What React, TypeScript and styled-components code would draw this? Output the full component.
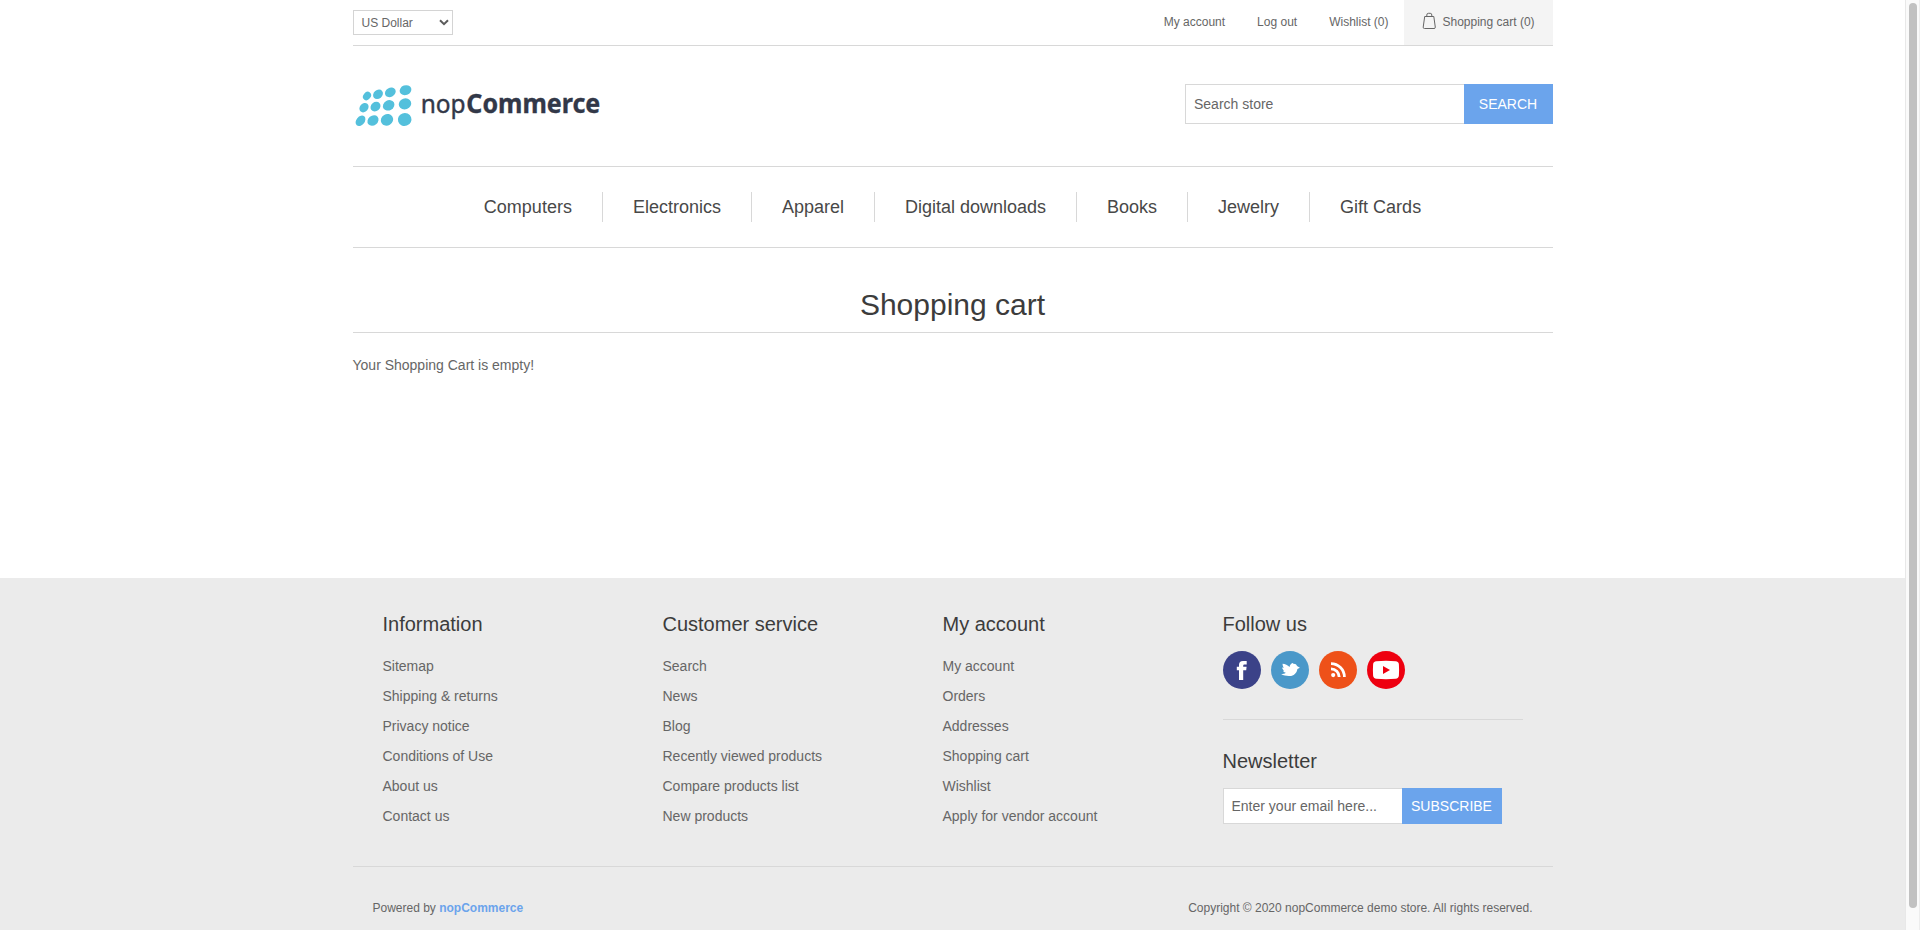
import React from "react";
import styled, { createGlobalStyle } from "styled-components";

const GlobalStyle = createGlobalStyle`
  * { box-sizing: border-box; }
  body {
    margin: 0;
    background: #fff;
    font-family: "Liberation Sans", Arial, Helvetica, sans-serif;
    font-size: 14px;
    color: #666;
    overflow: hidden;
  }
  a { color: inherit; text-decoration: none; }
  ul { list-style: none; margin: 0; padding: 0; }
`;

const Viewport = styled.div`
  display: grid;
  grid-template-columns: 1fr 15px;
  height: 930px;
  overflow: hidden;
`;

const Page = styled.div`
  display: flex;
  flex-direction: column;
  min-width: 0;
`;

const ScrollTrack = styled.div`
  background: #fafafa;
  border-left: 1px solid #e8e8e8;
  border-right: 1px solid #ededed;
  padding: 3px 2px 0 3px;
`;

const ScrollThumb = styled.div`
  width: 8px;
  height: 905px;
  border-radius: 4px;
  background: #c1c1c1;
`;

const Container = styled.div`
  width: 1200px;
  margin: 0 auto;
`;

const TopBar = styled(Container)`
  display: flex;
  justify-content: space-between;
  height: 46px;
  border-bottom: 1px solid #d8d8d8;
  font-size: 12px;
`;

const Currency = styled.div`
  display: flex;
  align-items: center;
  justify-content: space-between;
  width: 100px;
  height: 25px;
  margin-top: 10px;
  padding: 0 3px 0 8px;
  border: 1px solid #d4d4d4;
  background: #fff;
`;

const AccountLinks = styled.nav`
  display: flex;
  line-height: 44px;
`;

const AccountLink = styled.a<{ $space: number }>`
  margin-right: ${(p) => p.$space}px;
`;

const CartLink = styled.a`
  display: flex;
  width: 149px;
  height: 45px;
  padding-left: 18px;
  background: #f4f4f4;
`;

const BagIcon = styled.svg`
  margin: 12px 6px 0 0;
`;

const Header = styled(Container)`
  display: flex;
  justify-content: space-between;
  height: 120px;
  padding-top: 38px;
`;

const Logo = styled.svg`
  margin-top: -14px;
  overflow: visible;
  font-family: "Noto Sans", "Open Sans", sans-serif;
`;

const SearchForm = styled.form`
  display: flex;
`;

const Field = styled.input<{ $w: number; $h: number; $pad: number }>`
  width: ${(p) => p.$w}px;
  height: ${(p) => p.$h}px;
  padding: 0 ${(p) => p.$pad}px;
  border: 1px solid #d8d8d8;
  border-right: 0;
  border-radius: 0;
  background: #fff;
  font: inherit;
  color: #666;
  &::placeholder { color: #666; opacity: 1; }
`;

const ActionButton = styled.button<{ $w: number; $h: number }>`
  width: ${(p) => p.$w}px;
  height: ${(p) => p.$h}px;
  padding: 0;
  border: 0;
  background: #6ba4ec;
  color: #fff;
  font: inherit;
  text-transform: uppercase;
`;

const MenuBar = styled(Container)`
  display: flex;
  justify-content: center;
  align-items: center;
  height: 82px;
  border-top: 1px solid #d8d8d8;
  border-bottom: 1px solid #d8d8d8;
`;

const MenuItem = styled.a`
  padding: 0 30px;
  line-height: 30px;
  font-size: 18px;
  color: #484848;
  & + & { border-left: 1px solid #d8d8d8; }
`;

const Main = styled(Container)`
  height: 330px;
`;

const PageTitle = styled.h1`
  height: 85px;
  margin: 0;
  padding-top: 39px;
  border-bottom: 1px solid #d8d8d8;
  font-size: 30px;
  line-height: 35px;
  font-weight: 400;
  text-align: center;
  color: #3c3c3c;
`;

const EmptyMessage = styled.p`
  margin: 24px 0 0;
  line-height: 16px;
`;

const Footer = styled.footer`
  flex: 1;
  background: #ebebeb;
`;

const FooterUpper = styled(Container)`
  display: grid;
  grid-template-columns: 280px 280px 280px 300px;
  height: 289px;
  padding: 35px 30px 0;
  border-bottom: 1px solid #d8d8d8;
`;

const FooterTitle = styled.h2`
  margin: 0;
  font-size: 20px;
  line-height: 23px;
  font-weight: 400;
  color: #3c3c3c;
`;

const FooterList = styled.ul`
  margin-top: 15px;
  line-height: 30px;
`;

const Socials = styled.div`
  display: flex;
  gap: 10px;
  height: 69px;
  margin-top: 15px;
  border-bottom: 1px solid #d8d8d8;
`;

const Newsletter = styled.div`
  padding-top: 30px;
`;

const NewsletterForm = styled.form`
  display: flex;
  margin-top: 15px;
`;

const FooterLower = styled(Container)`
  display: flex;
  justify-content: space-between;
  padding: 34px 20px 0;
  font-size: 12px;
  line-height: 14px;
`;

const PoweredLink = styled.a`
  font-weight: 700;
  color: #6ba4ec;
`;

const menu = ["Computers", "Electronics", "Apparel", "Digital downloads", "Books", "Jewelry", "Gift Cards"];

const columns = [
  {
    title: "Information",
    links: ["Sitemap", "Shipping & returns", "Privacy notice", "Conditions of Use", "About us", "Contact us"],
  },
  {
    title: "Customer service",
    links: ["Search", "News", "Blog", "Recently viewed products", "Compare products list", "New products"],
  },
  {
    title: "My account",
    links: ["My account", "Orders", "Addresses", "Shopping cart", "Wishlist", "Apply for vendor account"],
  },
];

// cx, cy, rx, ry of each dot in the logo mark
const dots = [
  [81, 288, 13.5, 11], [114, 283, 16, 13], [151, 277, 17, 13.5], [196.5, 270.5, 18, 14.5],
  [72, 323, 15.5, 12.5], [106.5, 320, 16, 13.5], [146, 316, 18, 15], [195, 311.5, 19, 16.5],
  [61.5, 362.5, 17.5, 12.5], [99, 361.5, 18, 14.5], [141, 359.5, 19, 17], [194, 358.5, 20.5, 19.5],
];

function SocialIcon({ color, children }: { color: string; children: React.ReactNode }) {
  return (
    <svg width="38" height="38" viewBox="0 0 38 38">
      <circle cx="19" cy="19" r="19" fill={color} />
      {children}
    </svg>
  );
}

export default function App() {
  return (
    <Viewport>
      <GlobalStyle />
      <Page>
        <TopBar>
          <Currency>
            <span>US Dollar</span>
            <svg width="10" height="7" viewBox="0 0 10 7" fill="none" stroke="#5c5c5c" strokeWidth="2">
              <path d="M1 1.2 5 5.2 9 1.2" />
            </svg>
          </Currency>
          <AccountLinks>
            <AccountLink $space={32}>My account</AccountLink>
            <AccountLink $space={32}>Log out</AccountLink>
            <AccountLink $space={15}>Wishlist (0)</AccountLink>
            <CartLink>
              <BagIcon width="15" height="18" viewBox="0 0 15 18" fill="none" stroke="#666">
                <path d="M2.7 4.5h9.1l1.5 10.7q.1 1.3-1.3 1.3H2.5q-1.4 0-1.3-1.3z" />
                <path d="M4.8 4.2V3q0-1.7 1.6-1.7h1.8q1.6 0 1.6 1.7v1.2" />
              </BagIcon>
              <span>Shopping cart (0)</span>
            </CartLink>
          </AccountLinks>
        </TopBar>

        <Header>
          <Logo width="250" height="70" viewBox="39 210 750 210">
            <g fill="#54c0dc">
              {dots.map(([x, y, rx, ry], i) => (
                <ellipse key={i} cx={x} cy={y} rx={rx} ry={ry} transform={`rotate(${-50 + (i % 4) * 10} ${x} ${y})`} />
              ))}
            </g>
            <g fill="#323848" fontSize="78">
              <text x="242" y="339" textLength="135" lengthAdjust="spacingAndGlyphs" stroke="#323848" strokeWidth="1.2">nop</text>
              <text x="379" y="339" fontWeight="700" textLength="402" lengthAdjust="spacingAndGlyphs" stroke="#323848" strokeWidth="1">Commerce</text>
            </g>
          </Logo>
          <SearchForm>
            <Field $w={279} $h={40} $pad={8.5} placeholder="Search store" />
            <ActionButton type="button" $w={89} $h={40}>Search</ActionButton>
          </SearchForm>
        </Header>

        <MenuBar as="nav">
          {menu.map((m) => (
            <MenuItem key={m}>{m}</MenuItem>
          ))}
        </MenuBar>

        <Main>
          <PageTitle>Shopping cart</PageTitle>
          <EmptyMessage>Your Shopping Cart is empty!</EmptyMessage>
        </Main>

        <Footer>
          <FooterUpper>
            {columns.map((c) => (
              <div key={c.title}>
                <FooterTitle>{c.title}</FooterTitle>
                <FooterList>
                  {c.links.map((l) => (
                    <li key={l}><a>{l}</a></li>
                  ))}
                </FooterList>
              </div>
            ))}
            <div>
              <FooterTitle>Follow us</FooterTitle>
              <Socials>
                <SocialIcon color="#3b4288">
                  <path fill="#fff" d="M16 29V19.2h-2.2v-3.4H16v-2q0-3.9 4-3.9h3.7v3.6h-2.3q-1.2 0-1.2 1.2v1.1h3.4l-.4 3.4h-3V29z" />
                </SocialIcon>
                <SocialIcon color="#4a98c9">
                  <path fill="#fff" d="M11.6 12.8c2.6.2 5 1.2 7 3.2.2-2 1.3-3.4 3.2-4l.5.8c1.8-.2 3.2.7 3.7 2.3l2.9 1.6-2.5 1.3c-.7 4.3-3.6 7-7.7 7-3.2.1-6-.3-8.6-1.9 1.8 0 3.4-.3 4.8-1.4-1.4-.3-2.4-1-2.9-2l1.3-.3c-1.3-.7-2-1.7-2.1-3l1.6.3c-.9-1.2-1.3-2.4-1.2-3.9z" />
                </SocialIcon>
                <SocialIcon color="#ee5119">
                  <circle cx="14.2" cy="24.1" r="2.1" fill="#fff" />
                  <path d="M12 17.8A8.2 8.2 0 0 1 20.2 26M12 12.6A13.4 13.4 0 0 1 25.4 26" fill="none" stroke="#fff" strokeWidth="2.8" />
                </SocialIcon>
                <SocialIcon color="#ee0010">
                  <path fill="#fff" d="M9.4 10.2q9.6-.8 19.2 0 3.1.2 3.3 3.2.4 5.6 0 11.2-.2 3-3.3 3.2-9.6.8-19.2 0-3.1-.2-3.3-3.2-.4-5.6 0-11.2.2-3 3.3-3.2z" />
                  <path fill="#ee0010" d="M16 14.9v8.2l7-4.1z" />
                </SocialIcon>
              </Socials>
              <Newsletter>
                <FooterTitle>Newsletter</FooterTitle>
                <NewsletterForm>
                  <Field $w={179} $h={36} $pad={8} placeholder="Enter your email here..." />
                  <ActionButton type="button" $w={100} $h={36}>Subscribe</ActionButton>
                </NewsletterForm>
              </Newsletter>
            </div>
          </FooterUpper>
          <FooterLower>
            <span>Powered by <PoweredLink>nopCommerce</PoweredLink></span>
            <span>Copyright © 2020 nopCommerce demo store. All rights reserved.</span>
          </FooterLower>
        </Footer>
      </Page>
      <ScrollTrack><ScrollThumb /></ScrollTrack>
    </Viewport>
  );
}
